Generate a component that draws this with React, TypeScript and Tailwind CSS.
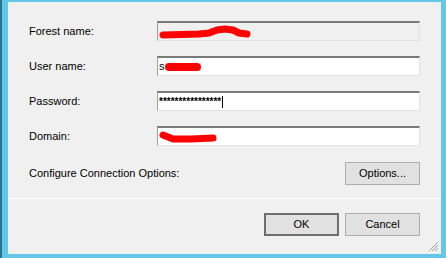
import React from "react";

function Field({
  label,
  disabled,
  children,
}: {
  label: string;
  disabled?: boolean;
  children?: React.ReactNode;
}) {
  return (
    <div className="flex h-[20px] items-center">
      <div className="w-[128px] text-[11px] text-black">{label}</div>
      <div
        className={
          "relative flex h-[20px] w-[263px] items-center border border-t-2 border-t-[#7a7a7a] border-l-[#a0a0a0] border-r-[#e3e3e3] border-b-[#e3e3e3] pl-[1px] " +
          (disabled ? "bg-[#f0f0f0]" : "bg-white")
        }
      >
        {children}
      </div>
    </div>
  );
}

function Scribble({ d, w, h, sw = 7 }: { d: string; w: number; h: number; sw?: number }) {
  return (
    <svg width={w} height={h} viewBox={`0 0 ${w} ${h}`} className="block">
      <path d={d} stroke="#ff0000" strokeWidth={sw} strokeLinecap="round" strokeLinejoin="round" fill="none" />
    </svg>
  );
}

export default function App() {
  return (
    <div
      className="flex h-[258px] w-[446px] border-l-2 border-l-[#2a7593] bg-[#63c7e9] pb-[4px] pl-[6px] pr-[5px] pt-[2px]"
      style={{ fontFamily: '"Liberation Sans", Arial, sans-serif' }}
    >
      <div className="relative flex flex-1 flex-col bg-[#f0f0f0]">
        {/* fields */}
        <div className="flex flex-col gap-[15px] px-[21px] pt-[19px]">
          <Field label="Forest name:" disabled>
            <Scribble w={92} h={16} d="M4 11 L40 10 L50 9 L58 6 L66 5 L74 6 L80 9 L88 10" />
          </Field>
          <Field label="User name:">
            <span className="text-[11px] leading-none text-black">s</span>
            <Scribble w={36} h={14} sw={8} d="M4 7 L32 7" />
          </Field>
          <Field label="Password:">
            <span className="text-[10px] font-bold leading-none text-black">****************</span>
            <span className="ml-[1px] h-[12px] w-[1px] bg-black" />
          </Field>
          <Field label="Domain:">
            <Scribble w={58} h={16} sw={7} d="M4 6 L14 10 L32 10 L54 9" />
          </Field>

          <div className="mt-[1px] flex h-[23px] items-center justify-between">
            <span className="text-[11px] text-black">Configure Connection Options:</span>
            <button className="h-[23px] w-[75px] border border-[#adadad] bg-[#e1e1e1] text-[11px] text-black">
              Options...
            </button>
          </div>
        </div>

        {/* separator */}
        <div className="mt-[13px] h-[1px] bg-white" />

        <div className="flex justify-end gap-[6px] px-[21px] pt-[14px]">
          <button className="h-[23px] w-[75px] border-2 border-[#6e6e6e] bg-[#e1e1e1] text-[11px] text-black">OK</button>
          <button className="h-[23px] w-[75px] border border-[#adadad] bg-[#e1e1e1] text-[11px] text-black">Cancel</button>
        </div>

        {/* size grip */}
        <svg width="12" height="12" viewBox="0 0 12 12" className="absolute bottom-[2px] right-[2px]">
          <path d="M11 2 L2 11 M11 5 L5 11 M11 8 L8 11" stroke="#a0a0a0" strokeWidth="1" />
        </svg>
      </div>
    </div>
  );
}
